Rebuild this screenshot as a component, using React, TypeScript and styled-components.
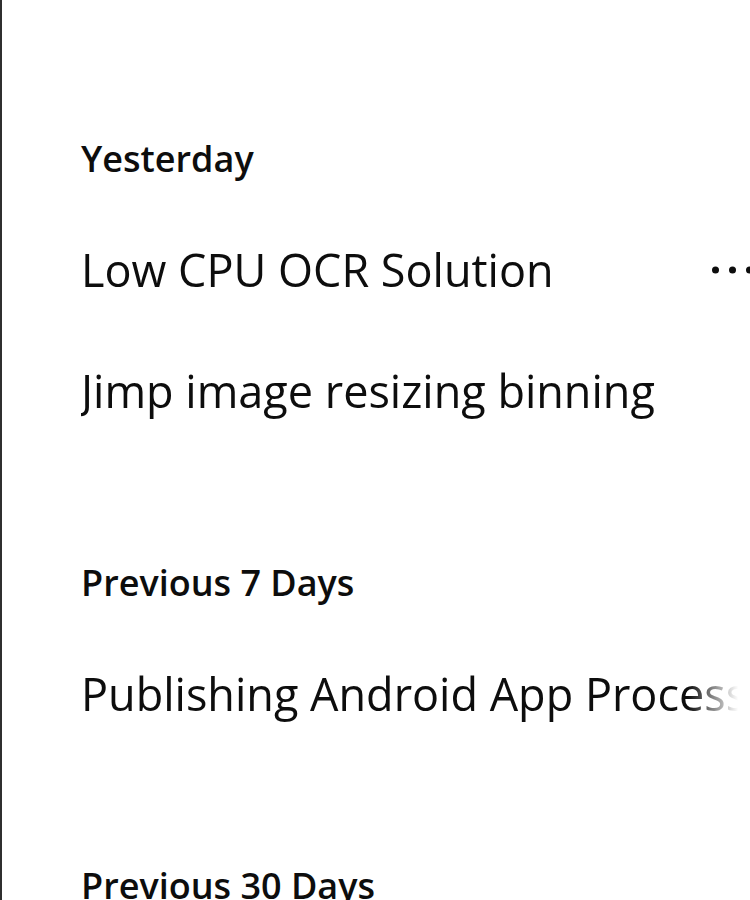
import React from 'react';
import styled, { createGlobalStyle } from 'styled-components';

type Chat = { id: string; title: string; active?: boolean };
type Group = { label: string; chats: Chat[] };

const groups: Group[] = [
  {
    label: 'Yesterday',
    chats: [
      { id: 'a', title: 'Low CPU OCR Solution', active: true },
      { id: 'b', title: 'Jimp image resizing binning' },
    ],
  },
  {
    label: 'Previous 7 Days',
    chats: [{ id: 'c', title: 'Publishing Android App Process' }],
  },
  {
    label: 'Previous 30 Days',
    chats: [],
  },
];

//
// MAIN COMPONENT
//
const App = () => {
  return (
    <>
      <GlobalStyle />
      <Sidebar>
        {groups.map((group) => (
          <Section key={group.label}>
            <Heading>{group.label}</Heading>
            <ChatList>
              {group.chats.map((chat) => (
                <ChatRow key={chat.id}>
                  <ChatTitle>{chat.title}</ChatTitle>
                  {chat.active && (
                    <MoreButton aria-label="Options">
                      <Dot />
                      <Dot />
                      <Dot />
                    </MoreButton>
                  )}
                </ChatRow>
              ))}
            </ChatList>
          </Section>
        ))}
      </Sidebar>
    </>
  );
};

export default App;

//
// STYLED COMPONENT
//
const GlobalStyle = createGlobalStyle`
  html, body {
    margin: 0;
    padding: 0;
    background: #ffffff;
    overflow: hidden;
  }
  body {
    font-family: "Open Sans", "Noto Sans", "Liberation Sans", sans-serif;
    color: #0d0d0d;
  }
`;

const Sidebar = styled.nav`
  box-sizing: border-box;
  width: 750px;
  height: 900px;
  overflow: hidden;
  border-left: 2px solid #2f2f2f;
  padding: 135px 0 0 79px;
`;

const Section = styled.section`
  & + & {
    margin-top: 108px;
  }
`;

const Heading = styled.h3`
  margin: 0 0 26px;
  font-size: 36px;
  line-height: 48px;
  font-weight: 600;
  white-space: nowrap;
`;

const ChatList = styled.ol`
  list-style: none;
  margin: 0;
  padding: 0;
  width: 720px;
`;

const ChatRow = styled.li`
  position: relative;
  display: flex;
  align-items: center;
  height: 121px;
`;

const ChatTitle = styled.div`
  width: 657px;
  overflow: hidden;
  white-space: nowrap;
  font-size: 45px;
  font-weight: 400;
  -webkit-mask-image: linear-gradient(to right, #000 calc(100% - 50px), transparent);
  mask-image: linear-gradient(to right, #000 calc(100% - 50px), transparent);
`;

const MoreButton = styled.button`
  position: absolute;
  left: 631px;
  top: 50%;
  transform: translateY(-50%);
  display: flex;
  gap: 10px;
  padding: 0;
  border: 0;
  background: transparent;
`;

const Dot = styled.span`
  width: 7px;
  height: 7px;
  border-radius: 50%;
  background: #0d0d0d;
`;
